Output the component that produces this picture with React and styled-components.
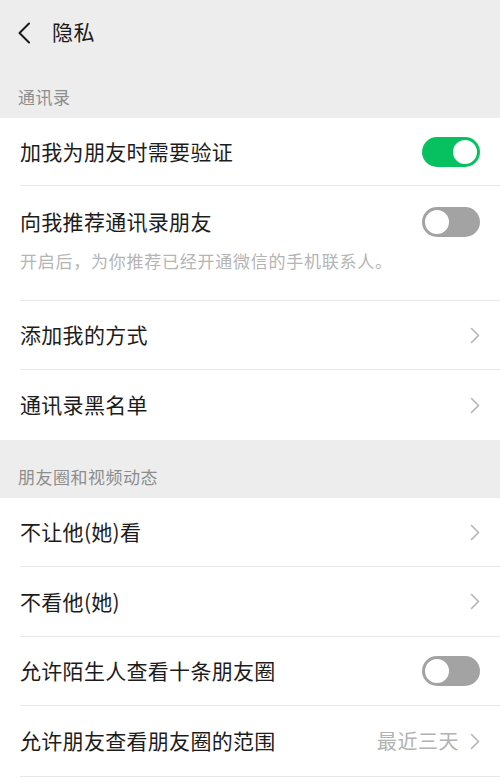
import React from "react";
import styled, { createGlobalStyle } from "styled-components";

const GlobalStyle = createGlobalStyle`
  html, body {
    margin: 0;
    padding: 0;
    background: #ededed;
  }
  body {
    font-family: "Noto Sans CJK SC", "Noto Sans", sans-serif;
    -webkit-font-smoothing: antialiased;
  }
`;

const sections = [
  {
    title: "通讯录",
    height: 54,
    rows: [
      { label: "加我为朋友时需要验证", type: "switch", on: true, height: 68 },
      {
        label: "向我推荐通讯录朋友",
        type: "switch",
        on: false,
        desc: "开启后，为你推荐已经开通微信的手机联系人。",
      },
      { label: "添加我的方式", type: "link", height: 69 },
      { label: "通讯录黑名单", type: "link", height: 70, last: true },
    ],
  },
  {
    title: "朋友圈和视频动态",
    height: 58,
    grow: true,
    rows: [
      { label: "不让他(她)看", type: "link", height: 69 },
      { label: "不看他(她)", type: "link", height: 70 },
      { label: "允许陌生人查看十条朋友圈", type: "switch", on: false, height: 69 },
      { label: "允许朋友查看朋友圈的范围", type: "link", value: "最近三天", height: 71 },
    ],
  },
];

const Chevron = () => (
  <svg width="10" height="17" viewBox="0 0 10 17" fill="none">
    <path
      d="M1.5 1.5 L8.5 8.5 L1.5 15.5"
      stroke="#b5b5b5"
      strokeWidth="1.6"
      strokeLinecap="round"
      strokeLinejoin="round"
    />
  </svg>
);

const BackIcon = () => (
  <svg width="14" height="22" viewBox="0 0 14 22" fill="none">
    <path
      d="M12 1.5 L2.5 11 L12 20.5"
      stroke="#1a1a1a"
      strokeWidth="2"
      strokeLinecap="round"
      strokeLinejoin="round"
    />
  </svg>
);

const App = () => {
  return (
    <Page>
      <GlobalStyle />
      <Header>
        <BackButton>
          <BackIcon />
        </BackButton>
        <Title>隐私</Title>
      </Header>
      {sections.map((section) => (
        <React.Fragment key={section.title}>
          <SectionLabel $height={section.height}>{section.title}</SectionLabel>
          <Card $grow={section.grow}>
            {section.rows.map((row) => (
              <Row key={row.label}>
                <RowInner $height={row.height} $last={row.last} $tall={!!row.desc}>
                  <RowMain>
                    <RowLabel>{row.label}</RowLabel>
                    {row.type === "switch" ? (
                      <Switch $on={row.on}>
                        <Knob $on={row.on} />
                      </Switch>
                    ) : (
                      <RowRight>
                        {row.value && <RowValue>{row.value}</RowValue>}
                        <Chevron />
                      </RowRight>
                    )}
                  </RowMain>
                  {row.desc && <RowDesc>{row.desc}</RowDesc>}
                </RowInner>
              </Row>
            ))}
          </Card>
        </React.Fragment>
      ))}
    </Page>
  );
};

export default App;

const Page = styled.div`
  width: 500px;
  min-height: 784px;
  background: #ededed;
  display: flex;
  flex-direction: column;
`;

const Header = styled.div`
  height: 64px;
  flex-shrink: 0;
  display: flex;
  align-items: center;
  padding-left: 17px;
  box-sizing: border-box;
`;

const BackButton = styled.div`
  display: flex;
  align-items: center;
  width: 35px;
  margin-top: 1px;
`;

const Title = styled.div`
  font-size: 21px;
  line-height: 28px;
  color: #191919;
  letter-spacing: 0.5px;
  margin-top: -2px;
`;

const SectionLabel = styled.div`
  height: ${(p) => p.$height}px;
  flex-shrink: 0;
  box-sizing: border-box;
  display: flex;
  align-items: flex-end;
  padding: 0 0 10px 18px;
  font-size: 17px;
  line-height: 22px;
  letter-spacing: 0.5px;
  color: #8d8d8d;
`;

const Card = styled.div`
  background: #ffffff;
  display: flex;
  flex-direction: column;
  flex: ${(p) => (p.$grow ? "1 0 auto" : "0 0 auto")};
  padding-bottom: ${(p) => (p.$grow ? "12px" : "0")};
`;

const Row = styled.div`
  padding-left: 20px;
`;

const RowInner = styled.div`
  box-sizing: border-box;
  height: ${(p) => (p.$height ? `${p.$height}px` : "auto")};
  display: flex;
  flex-direction: column;
  justify-content: ${(p) => (p.$tall ? "flex-start" : "center")};
  padding: ${(p) => (p.$tall ? "21px 20px 27px 0" : "0 20px 0 0")};
  border-bottom: ${(p) => (p.$last ? "none" : "1px solid #e8e8e8")};
`;

const RowMain = styled.div`
  display: flex;
  align-items: center;
  justify-content: space-between;
  height: 30px;
`;

const RowLabel = styled.div`
  font-size: 21px;
  letter-spacing: 0.3px;
  color: #1c1c1c;
  line-height: 28px;
  margin-top: -2px;
`;

const RowRight = styled.div`
  display: flex;
  align-items: center;
  gap: 11px;
`;

const RowValue = styled.div`
  font-size: 20px;
  letter-spacing: 0.5px;
  color: #b2b2b2;
  margin-top: -2px;
`;

const RowDesc = styled.div`
  margin-top: 12px;
  font-size: 17px;
  line-height: 24px;
  letter-spacing: 0.75px;
  color: #b5b5b5;
`;

const Switch = styled.div`
  width: 58px;
  height: 30px;
  border-radius: 15px;
  box-sizing: border-box;
  background: ${(p) => (p.$on ? "#07c160" : "#a3a3a3")};
  display: flex;
  align-items: center;
  justify-content: ${(p) => (p.$on ? "flex-end" : "flex-start")};
  padding: 0 1px;
`;

const Knob = styled.div`
  width: 28px;
  height: 28px;
  border-radius: 50%;
  box-sizing: border-box;
  background: #ffffff;
  border: 2px solid ${(p) => (p.$on ? "#07c160" : "#a3a3a3")};
`;
